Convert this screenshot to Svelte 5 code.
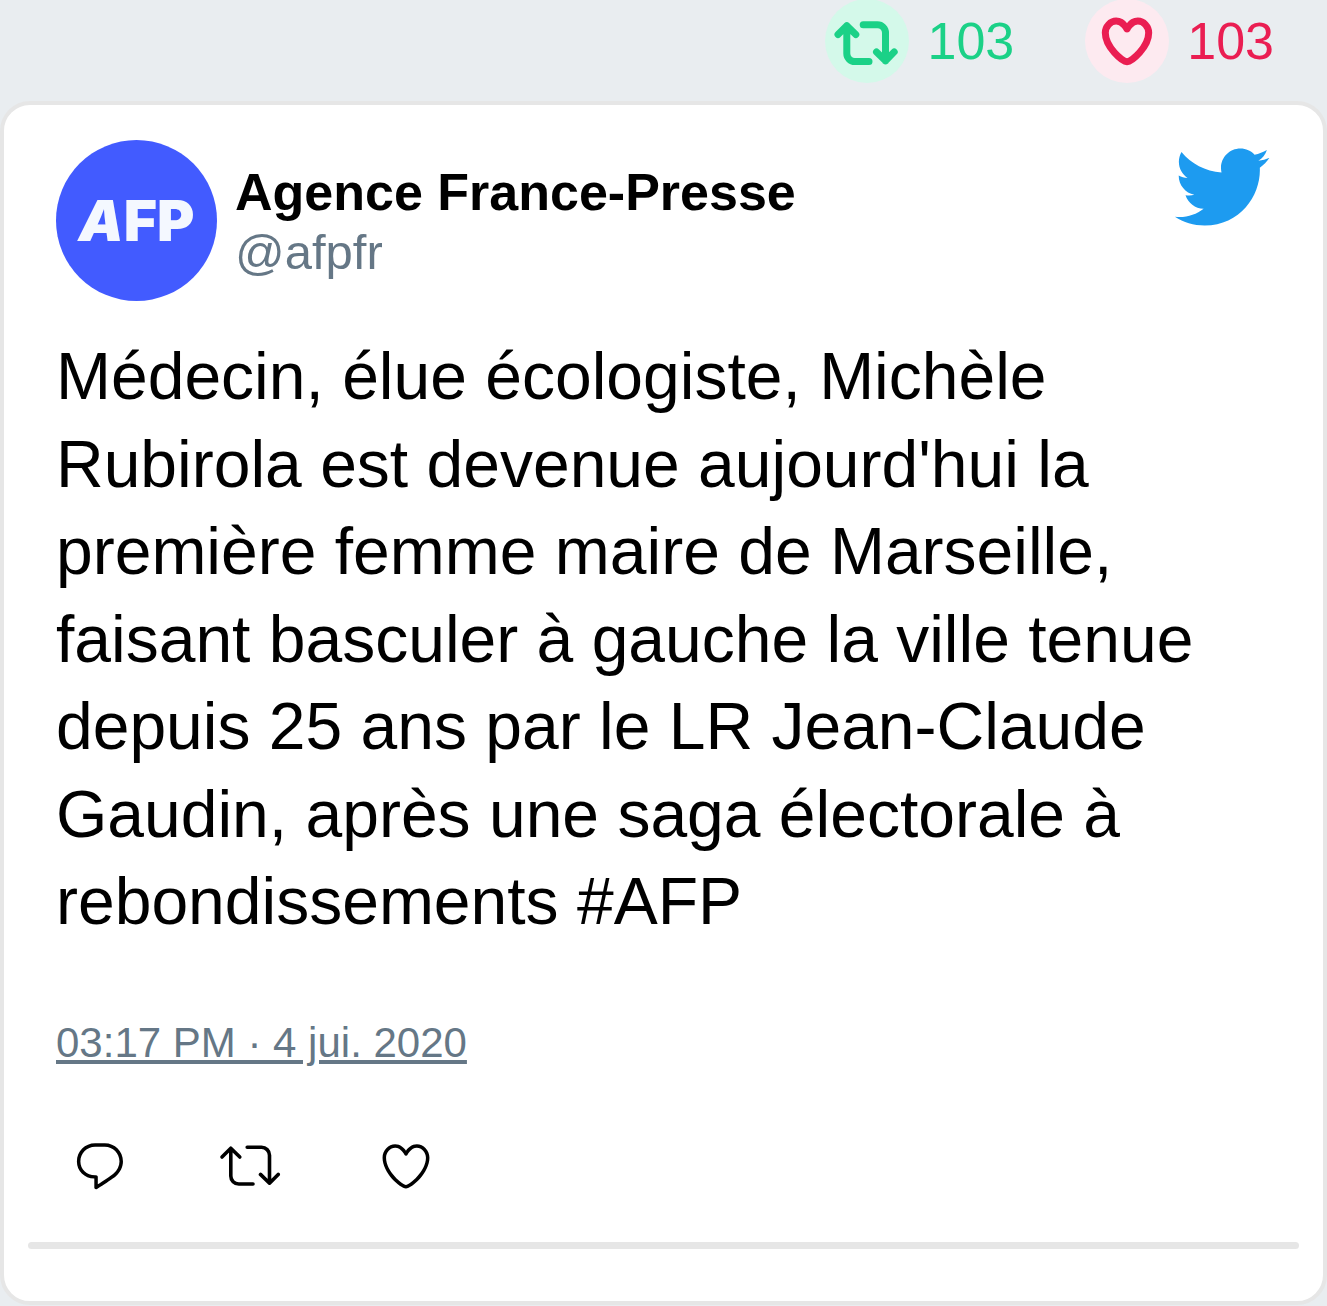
<script>
  const retweets = 103;
  const likes = 103;
  const heart =
    'M12 21.638h-.014C9.403 21.59 1.95 14.856 1.95 8.478c0-3.064 2.525-5.754 5.403-5.754 2.29 0 3.83 1.58 4.646 2.73.814-1.148 2.354-2.73 4.645-2.73 2.88 0 5.404 2.69 5.404 5.755 0 6.376-7.454 13.11-10.037 13.157H12zM7.354 4.225c-2.08 0-3.903 1.988-3.903 4.255 0 5.74 7.034 11.596 8.55 11.658 1.518-.062 8.55-5.917 8.55-11.658 0-2.267-1.823-4.255-3.903-4.255-2.528 0-3.94 2.936-3.952 2.965-.23.562-1.156.562-1.387 0-.014-.03-1.425-2.965-3.954-2.965z';
  const comment =
    'M14.046 2.242l-4.148-.01h-.002c-4.374 0-7.8 3.427-7.8 7.802 0 4.098 3.186 7.206 7.465 7.37v3.828c0 .108.044.286.12.403.142.225.384.347.632.347.138 0 .277-.038.402-.118.264-.168 6.473-4.14 8.088-5.506 1.902-1.61 3.04-3.97 3.043-6.312v-.017c-.006-4.367-3.43-7.787-7.8-7.788zm3.787 12.972c-1.134.96-4.862 3.405-6.772 4.643V16.67c0-.414-.335-.75-.75-.75h-.396c-3.66 0-6.318-2.476-6.318-5.886 0-3.534 2.768-6.302 6.3-6.302l4.147.01h.002c3.532 0 6.3 2.766 6.302 6.296-.003 1.91-.942 3.844-2.514 5.176z';
  const bird =
    'M23.643 4.937c-.835.37-1.732.62-2.675.733.962-.576 1.7-1.49 2.048-2.578-.9.534-1.897.922-2.958 1.13-.85-.904-2.06-1.47-3.4-1.47-2.572 0-4.658 2.086-4.658 4.66 0 .364.042.718.12 1.06-3.873-.195-7.304-2.05-9.602-4.868-.4.69-.63 1.49-.63 2.342 0 1.616.823 3.043 2.072 3.878-.764-.025-1.482-.234-2.11-.583v.06c0 2.257 1.605 4.14 3.737 4.568-.392.106-.803.162-1.227.162-.3 0-.593-.028-.877-.082.593 1.85 2.313 3.198 4.352 3.234-1.595 1.25-3.604 1.995-5.786 1.995-.376 0-.747-.022-1.112-.065 2.062 1.323 4.51 2.093 7.14 2.093 8.57 0 13.255-7.098 13.255-13.254 0-.2-.005-.402-.014-.602.91-.658 1.7-1.477 2.323-2.41z';
</script>

{#snippet retweetPaths()}
  <path d="M2 21 10.8 12.2 19.8 21M10.8 12.2V40a8 8 0 0 0 8 8H33" />
  <path d="M27.2 11.3H41.5a8 8 0 0 1 8 8V47.2M40.5 38.4 49.5 47.2 58.2 38.4" />
{/snippet}

<main>
  <div class="stats">
    <button class="stat green" aria-label="Retweets">
      <span class="disc">
        <svg class="bold-retweet" viewBox="1 -2.5 60 60">{@render retweetPaths()}</svg>
      </span>
      <span>{retweets}</span>
    </button>
    <button class="stat red" aria-label="Likes">
      <span class="disc">
        <svg class="bold-heart" viewBox="0 0 24 24"><path d={heart} /></svg>
      </span>
      <span>{likes}</span>
    </button>
  </div>

  <article class="card">
    <header>
      <div class="avatar"><span><i>A</i>FP</span></div>
      <div class="who">
        <strong>Agence France-Presse</strong>
        <span class="handle">@afpfr</span>
      </div>
      <svg class="bird" viewBox="0 0.7 24 24" aria-label="Twitter" role="img"><path d={bird} /></svg>
    </header>

    <p>
      Médecin, élue écologiste, Michèle Rubirola est devenue aujourd'hui la première femme maire de
      Marseille, faisant basculer à gauche la ville tenue depuis 25 ans par le LR Jean-Claude
      Gaudin, après une saga électorale à rebondissements #AFP
    </p>

    <a class="date" href="#tweet">03:17 PM · 4 jui. 2020</a>

    <div class="actions">
      <button aria-label="Reply">
        <svg viewBox="0 0 24 24"><path d={comment} /></svg>
      </button>
      <button aria-label="Retweet">
        <svg class="retweet" viewBox="0 0 60 60">{@render retweetPaths()}</svg>
      </button>
      <button aria-label="Like">
        <svg viewBox="0 0 24 24"><path d={heart} /></svg>
      </button>
    </div>

    <hr />
  </article>
</main>

<style>
  :global(body) {
    background: #e9edf0;
  }
  main {
    font-family: 'Liberation Sans', Arial, sans-serif;
    color: #000;
  }
  button {
    padding: 0;
    border: 0;
    background: none;
    font: inherit;
    color: inherit;
    cursor: pointer;
  }
  svg {
    display: block;
    flex: none;
    overflow: visible;
  }
  .stats {
    display: flex;
    justify-content: flex-end;
    align-items: center;
    gap: 71px;
    height: 82px;
    padding-right: 53px;
    font-size: 52px;
  }
  .stat {
    display: flex;
    align-items: center;
    gap: 18px;
  }
  .green {
    color: #1bd187;
  }
  .red {
    color: #ea1e52;
  }
  .disc {
    display: grid;
    place-items: center;
    width: 84px;
    height: 84px;
    border-radius: 50%;
  }
  .green .disc {
    background: #d4f9ea;
  }
  .red .disc {
    background: #fdeaf0;
  }
  .retweet,
  .bold-retweet {
    width: 60px;
    height: 60px;
    fill: none;
    stroke: currentColor;
    stroke-width: 3.6;
    stroke-linecap: round;
    stroke-linejoin: round;
  }
  .bold-retweet {
    stroke-width: 7;
  }
  .bold-heart {
    width: 56px;
    height: 56px;
    fill: currentColor;
    stroke: currentColor;
    stroke-width: 1.5;
    stroke-linejoin: round;
  }
  .card {
    box-sizing: border-box;
    margin-top: 19px;
    padding: 35px 24px 52px;
    border: 4px solid #e6e6e6;
    border-radius: 30px;
    background: #fff;
  }
  header {
    display: flex;
    align-items: center;
    padding: 0 28px;
  }
  .avatar {
    display: grid;
    place-items: center;
    flex: none;
    width: 161px;
    height: 161px;
    border-radius: 50%;
    background: #425bff;
    color: #f4f8ff;
    font: 900 57px Inter, sans-serif;
  }
  .who {
    flex: 1;
    display: flex;
    flex-direction: column;
    padding: 2px 0 0 18px;
    line-height: 60px;
    font-size: 52px;
  }
  .handle {
    font-size: 49px;
    color: #657786;
  }
  .bird {
    width: 100px;
    height: 100px;
    align-self: flex-start;
    fill: #1d9bf0;
  }
  p {
    margin: 32px 28px 0;
    font-size: 66px;
    line-height: 1.326;
  }
  .date {
    display: block;
    width: fit-content;
    margin: 73px 28px 0;
    font-size: 42px;
    line-height: 48px;
    color: #657786;
  }
  .actions {
    display: flex;
    align-items: center;
    gap: 92px;
    margin: 69px 0 0 44px;
  }
  .actions svg {
    width: 56px;
    height: 56px;
    fill: currentColor;
  }
  .actions .retweet {
    width: 66px;
    height: 60px;
    padding-right: 6px;
    box-sizing: border-box;
    fill: none;
  }
  hr {
    height: 7px;
    margin: 46px 0 0;
    border: 0;
    border-radius: 4px;
    background: #e6e6e6;
  }
</style>
